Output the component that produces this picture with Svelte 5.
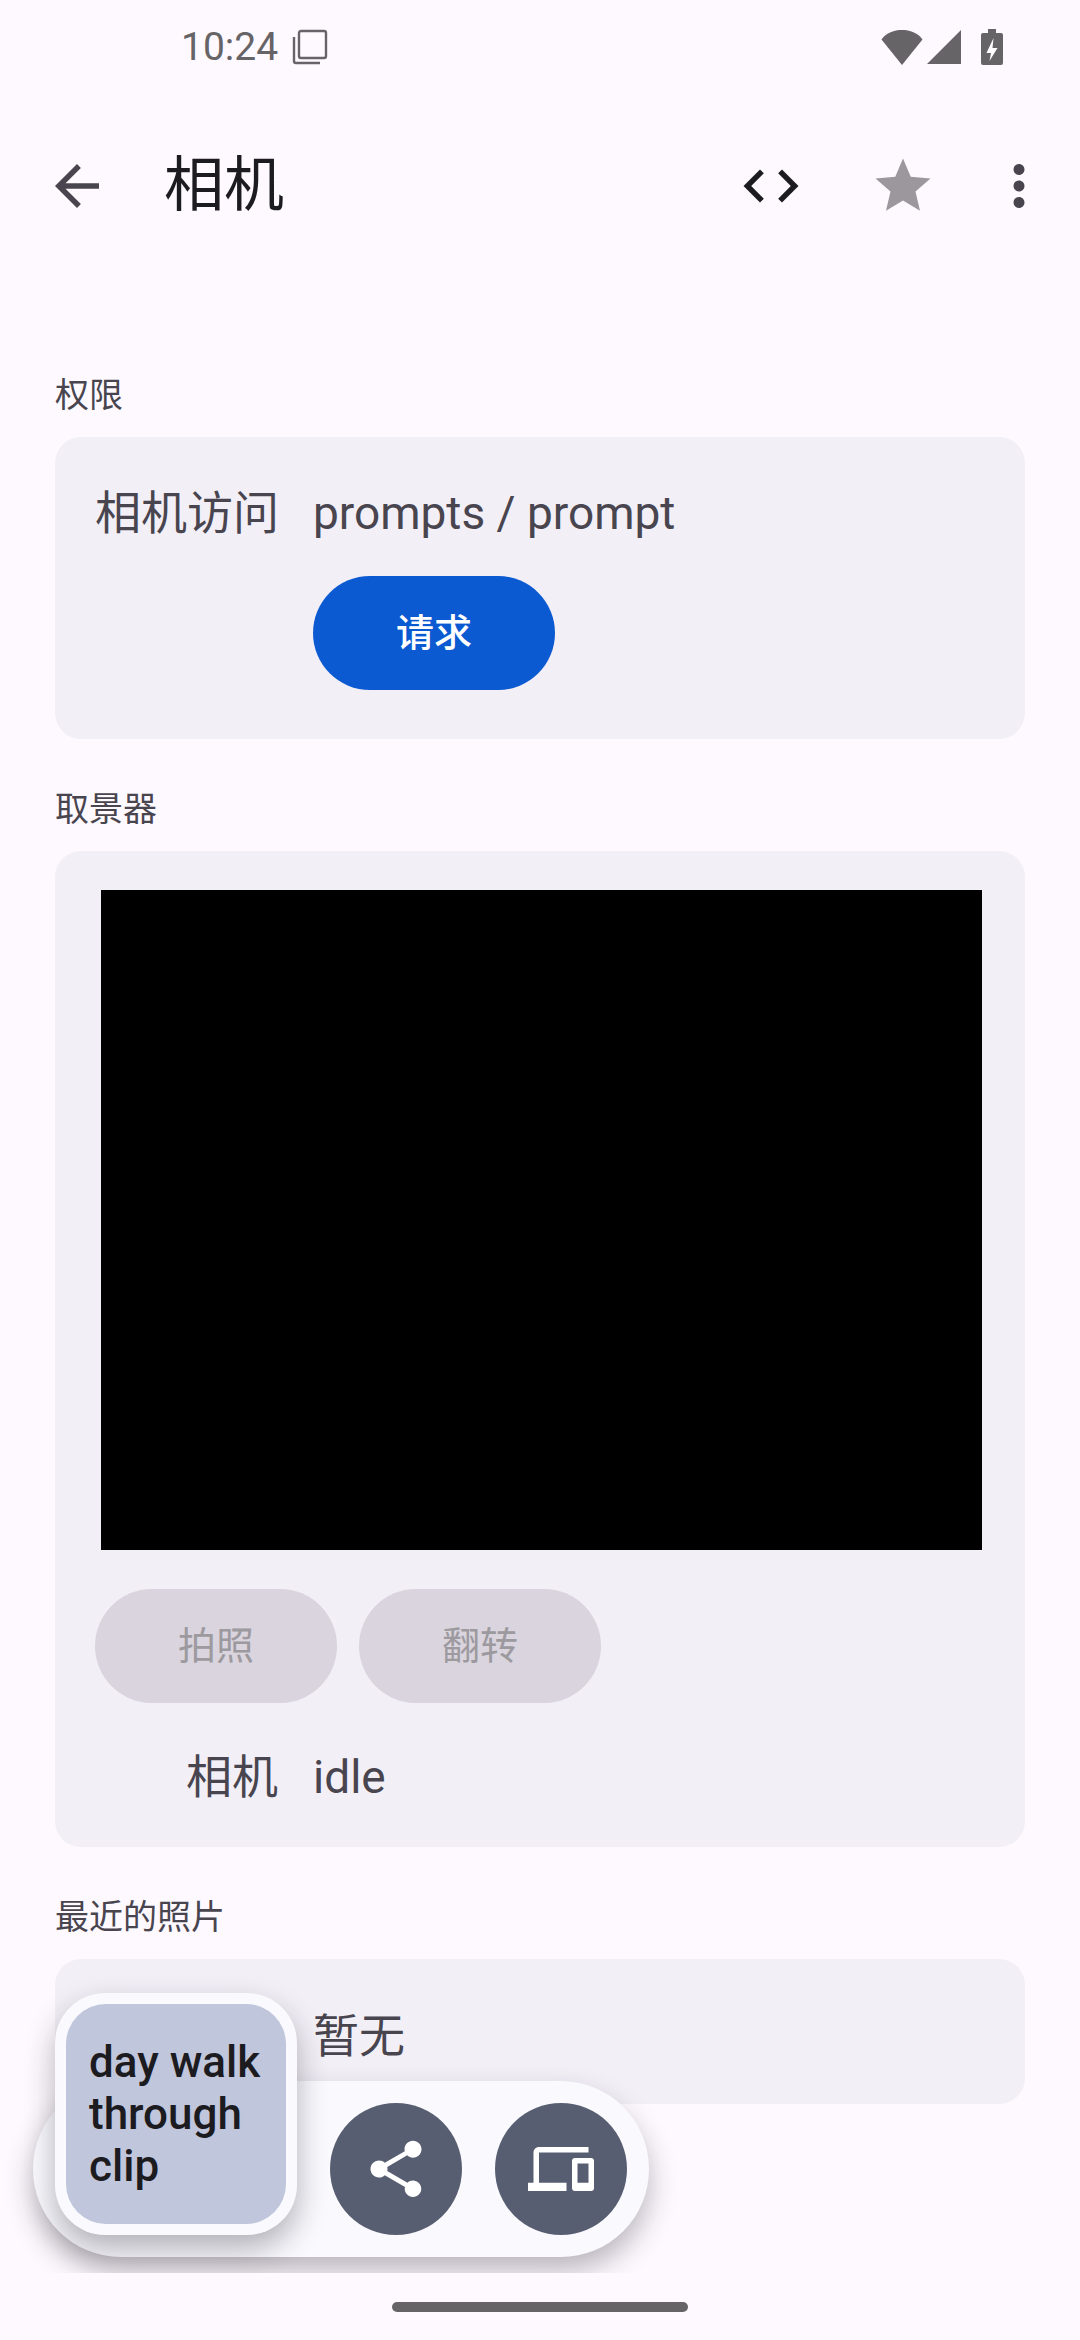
<script>
  const actions = ['拍照', '翻转'];
</script>

<div class="screen">
  <div class="status">
    <span class="time">10:24</span>
    <svg class="copy" width="36" height="36" viewBox="0 0 36 36">
      <rect x="7" y="2" width="27" height="27" rx="2" fill="none" stroke="#666467" stroke-width="2.4" />
      <path d="M2 8v24a2 2 0 0 0 2 2h24" fill="none" stroke="#666467" stroke-width="2.4" />
    </svg>
    <div class="spacer"></div>
    <svg class="wifi" width="42" height="36" viewBox="0 0 42 36">
      <path d="M0.5 10.5C5.5 3.500 13 1 21 1s15.500 2.500 20.500 9.500L21 36z" fill="#666467" />
    </svg>
    <svg class="signal" width="34" height="36" viewBox="0 0 34 36">
      <path d="M34 1v34H0z" fill="#666467" />
    </svg>
    <svg class="battery" width="22" height="36" viewBox="0 0 22 36">
      <path d="M7 0h8v4h5a2 2 0 0 1 2 2v28a2 2 0 0 1-2 2H2a2 2 0 0 1-2-2V6a2 2 0 0 1 2-2h5z" fill="#666467" />
      <path d="M12.500 9l-7 15h4.500l-1.500 8 8-13h-5z" fill="#fff" />
    </svg>
  </div>

  <header class="bar">
    <svg class="back" width="66" height="66" viewBox="0 0 24 24">
      <path d="M20 11H7.830l5.590-5.590L12 4l-8 8 8 8 1.410-1.410L7.830 13H20v-2z" fill="#49454f" />
    </svg>
    <h1>相机</h1>
    <div class="spacer"></div>
    <svg width="66" height="66" viewBox="0 0 24 24">
      <path d="M9.400 16.600L4.800 12l4.600-4.600L8 6l-6 6 6 6 1.400-1.400zm5.200 0l4.600-4.600-4.600-4.600L16 6l6 6-6 6-1.400-1.400z" fill="#1c1b1f" />
    </svg>
    <svg class="star" width="66" height="66" viewBox="0 0 24 24">
      <path d="M12 17.270L18.180 21l-1.640-7.030L22 9.240l-7.190-.610L12 2 9.190 8.630 2 9.240l5.460 4.730L5.820 21z" fill="#9c979d" />
    </svg>
    <svg class="more" width="66" height="66" viewBox="0 0 24 24">
      <path d="M12 8c1.100 0 2-.9 2-2s-.9-2-2-2-2 .9-2 2 .9 2 2 2zm0 2c-1.100 0-2 .9-2 2s.9 2 2 2 2-.9 2-2-.9-2-2-2zm0 6c-1.100 0-2 .9-2 2s.9 2 2 2 2-.9 2-2-.9-2-2-2z" fill="#49454f" />
    </svg>
  </header>

  <main>
    <h2 class="first">权限</h2>
    <section class="card perm">
      <div class="row">
        <span class="key">相机访问</span>
        <span class="val">prompts / prompt</span>
      </div>
      <div class="indent">
        <button class="pill primary">请求</button>
      </div>
    </section>

    <h2>取景器</h2>
    <section class="card finder">
      <div class="viewport"></div>
      <div class="btns">
        {#each actions as a}
          <button class="pill off" disabled>{a}</button>
        {/each}
      </div>
      <div class="row state">
        <span class="key">相机</span>
        <span class="val">idle</span>
      </div>
    </section>

    <h2>最近的照片</h2>
    <section class="card recent">
      <div class="row">
        <span class="key"></span>
        <span class="val">暂无</span>
      </div>
    </section>
  </main>

  <div class="dock">
    <div class="tile"><div class="tile-in">day walk through clip</div></div>
    <button class="round" aria-label="share">
      <svg width="68" height="68" viewBox="0 0 24 24">
        <path d="M18 16.080c-.76 0-1.440.3-1.960.77L8.910 12.700c.05-.23.09-.46.09-.7s-.04-.47-.09-.7l7.050-4.110c.54.5 1.250.81 2.040.81 1.660 0 3-1.340 3-3s-1.340-3-3-3-3 1.340-3 3c0 .24.04.47.09.7L8.040 9.810C7.500 9.310 6.790 9 6 9c-1.660 0-3 1.340-3 3s1.340 3 3 3c.79 0 1.500-.31 2.040-.81l7.120 4.160c-.05.21-.08.43-.08.65 0 1.610 1.310 2.920 2.920 2.920 1.610 0 2.920-1.310 2.920-2.920s-1.310-2.920-2.920-2.920z" fill="#fff" />
      </svg>
    </button>
    <button class="round" aria-label="devices">
      <svg width="66" height="66" viewBox="0 0 24 24">
        <path d="M4 6h18V4H4c-1.100 0-2 .9-2 2v11H0v3h14v-3H4V6zm19 2h-6c-.55 0-1 .45-1 1v10c0 .55.45 1 1 1h6c.55 0 1-.45 1-1V9c0-.55-.45-1-1-1zm-1 9h-4v-7h4v7z" fill="#fff" />
      </svg>
    </button>
  </div>
</div>

<div class="nav"><div class="handle"></div></div>

<style>
  :global(body) {
    background: #fef9ff;
    font-family: Roboto, "Noto Sans CJK SC", sans-serif;
  }

  .screen {
    position: relative;
    height: 2273px;
    overflow: hidden;
  }

  .spacer {
    flex: 1;
  }

  .status {
    display: flex;
    align-items: center;
    height: 94px;
    padding: 0 77px 0 181px;
    box-sizing: border-box;
  }

  .time {
    font-size: 39px;
    color: #666467;
    line-height: 94px;
  }

  .copy {
    margin-left: 14px;
  }

  .signal {
    margin-left: 4px;
  }

  .battery {
    margin-left: 20px;
  }

  .bar {
    display: flex;
    align-items: center;
    height: 128px;
    margin-top: 38px;
    padding: 0 28px 0 44px;
    box-sizing: border-box;
    height: 184px;
    margin-top: 0;
  }

  h1 {
    margin: 0 0 0 54px;
    font-size: 60px;
    font-weight: 400;
    color: #1c1b1f;
    line-height: 80px;
  }

  .star {
    margin-left: 66px;
  }

  .more {
    margin-left: 50px;
  }

  main {
    padding: 0 55px;
  }

  h2 {
    margin: 46px 0 18px;
    font-size: 34px;
    font-weight: 400;
    line-height: 48px;
    color: #49454f;
  }

  h2.first {
    margin-top: 0;
    padding-top: 93px;
    margin-top: 0;
  }

  .card {
    background: #f2eff7;
    border-radius: 26px;
  }

  .perm {
    padding: 46px 40px 49px;
  }

  .finder {
    padding: 39px 40px 40px;
  }

  .recent {
    padding: 47px 40px 38px;
  }

  .row {
    display: flex;
    gap: 35px;
    font-size: 46px;
    line-height: 60px;
    color: #49454f;
  }

  .key {
    width: 183px;
    text-align: right;
    white-space: nowrap;
  }

  .indent {
    margin: 33px 0 0 218px;
  }

  .pill {
    display: block;
    width: 242px;
    height: 114px;
    border: none;
    border-radius: 57px;
    font-family: inherit;
    font-size: 38px;
    line-height: 114px;
    padding: 0;
  }

  .primary {
    background: #0b5ad1;
    color: #fff;
    font-weight: 500;
  }

  .off {
    background: #d9d4dd;
    color: #9c999f;
  }

  .viewport {
    margin: 0 3px 0 6px;
    height: 660px;
    background: #000;
  }

  .btns {
    display: flex;
    gap: 22px;
    margin-top: 39px;
  }

  .state {
    margin-top: 44px;
  }

  .dock {
    position: absolute;
    left: 33px;
    top: 2081px;
    display: flex;
    align-items: center;
    gap: 33px;
    width: 616px;
    height: 176px;
    padding-left: 297px;
    box-sizing: border-box;
    background: #f9f9fe;
    border-radius: 88px;
    box-shadow: 0 14px 28px rgba(30, 25, 35, 0.3);
  }

  .tile {
    position: absolute;
    left: 22px;
    top: -88px;
    width: 242px;
    height: 242px;
    padding: 11px;
    box-sizing: border-box;
    background: #f9f9fe;
    border-radius: 50px;
    box-shadow: 0 14px 30px rgba(30, 25, 35, 0.32);
  }

  .tile-in {
    display: flex;
    align-items: center;
    height: 100%;
    padding: 0 20px 0 23px;
    box-sizing: border-box;
    background: #c0c6dc;
    border-radius: 40px;
    color: #1c1b1f;
    font-size: 44px;
    font-weight: 500;
    line-height: 52px;
  }

  .round {
    display: flex;
    align-items: center;
    justify-content: center;
    width: 132px;
    height: 132px;
    padding: 0;
    border: none;
    border-radius: 50%;
    background: #585e71;
  }

  .nav {
    display: flex;
    justify-content: center;
    height: 67px;
    padding-top: 29px;
    box-sizing: border-box;
  }

  .handle {
    width: 296px;
    height: 10px;
    border-radius: 5px;
    background: #666467;
  }
</style>
